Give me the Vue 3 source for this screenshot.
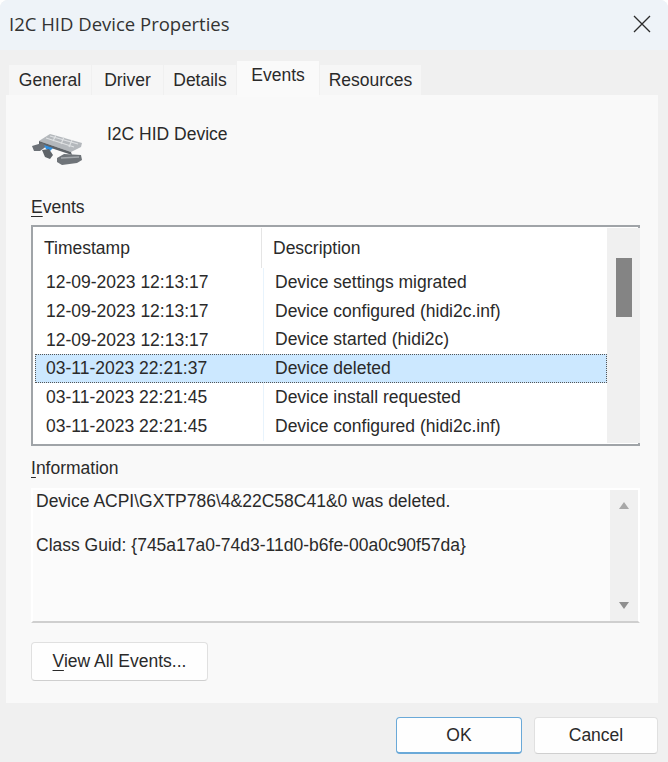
<template>
  <div class="dialog">
    <header class="titlebar">
      <span class="title">I2C HID Device Properties</span>
      <svg class="close" width="20" height="20" viewBox="0 0 20 20">
        <path d="M2 2 L18 18 M18 2 L2 18" stroke="#2b2b2b" stroke-width="1.3" fill="none" />
      </svg>
    </header>

    <nav class="tabs">
      <div
        v-for="tab in tabs"
        :key="tab.name"
        class="tab"
        :class="{ active: tab.name === 'Events' }"
        :style="{ width: tab.width + 'px' }"
      >
        {{ tab.name }}
      </div>
    </nav>

    <main class="panel">
      <div class="device">
        <svg class="device-icon" width="54" height="32" viewBox="0 0 54 32">
          <path d="M11 6 L19 1 L51 10 L50 14 L40 19 L8 8 Z" fill="#b4b8bc" />
          <path d="M8 8 L40 19 L41 22 L8 11 Z" fill="#5e6368" />
          <path d="M19 3 L47 11 M15 5 L43 14 M25 2 L22 8 M33 4 L30 11 M41 7 L38 14" stroke="#dfe1e3" stroke-width="1.2" fill="none" />
          <path d="M1 13 L11 10 L16 13 L9 18 L3 18 Z" fill="#6c7177" />
          <path d="M13 12 L22 15 L19 18 L15 16 Z" fill="#2f8fe0" />
          <path d="M11 17 L18 16 L22 22 L19 26 L14 24 Z" fill="#5f6469" />
          <path d="M26 25 L33 21 L50 22 L51 27 L46 30 L31 32 L26 29 Z" fill="#6f7479" />
          <path d="M30 25 L48 24" stroke="#a5a9ad" stroke-width="1.5" fill="none" />
        </svg>
        <span class="device-name">I2C HID Device</span>
      </div>

      <div class="group-label events-label"><u>E</u>vents</div>
      <div class="listview">
        <div class="list-body">
          <div class="list-head">
            <div class="col-time">Timestamp</div>
            <div class="col-desc">Description</div>
          </div>
          <div
            v-for="(event, i) in events"
            :key="i"
            class="list-row"
            :class="{ selected: i === 3 }"
          >
            <div class="col-time">{{ event.time }}</div>
            <div class="col-desc">{{ event.text }}</div>
          </div>
        </div>
        <div class="list-scroll">
          <div class="thumb"></div>
        </div>
      </div>

      <div class="group-label info-label"><u>I</u>nformation</div>
      <div class="infobox">
        <div class="info-text">
          <p>Device ACPI\GXTP786\4&amp;22C58C41&amp;0 was deleted.</p>
          <p>Class Guid: {745a17a0-74d3-11d0-b6fe-00a0c90f57da}</p>
        </div>
        <div class="info-scroll">
          <span class="arrow up"></span>
          <span class="arrow down"></span>
        </div>
      </div>

      <button class="button view-all"><u>V</u>iew All Events...</button>
    </main>

    <footer class="actions">
      <button class="button ok">OK</button>
      <button class="button cancel">Cancel</button>
    </footer>
  </div>
</template>

<script setup>
const tabs = [
  { name: 'General', width: 82 },
  { name: 'Driver', width: 71 },
  { name: 'Details', width: 72 },
  { name: 'Events', width: 82 },
  { name: 'Resources', width: 101 },
]

const events = [
  { time: '12-09-2023 12:13:17', text: 'Device settings migrated' },
  { time: '12-09-2023 12:13:17', text: 'Device configured (hidi2c.inf)' },
  { time: '12-09-2023 12:13:17', text: 'Device started (hidi2c)' },
  { time: '03-11-2023 22:21:37', text: 'Device deleted' },
  { time: '03-11-2023 22:21:45', text: 'Device install requested' },
  { time: '03-11-2023 22:21:45', text: 'Device configured (hidi2c.inf)' },
]
</script>

<style>
html,
body {
  margin: 0;
  background: #fff;
}
</style>

<style scoped>
.dialog {
  width: 668px;
  height: 762px;
  overflow: hidden;
  background: #f0f0f0;
  border-radius: 8px 8px 0 0;
  font-family: "Liberation Sans", Arial, sans-serif;
  font-size: 17.5px;
  color: #2a2a2a;
  display: flex;
  flex-direction: column;
}

.titlebar {
  height: 50px;
  flex: none;
  background: #eef3f8;
  display: flex;
  align-items: center;
  justify-content: space-between;
  padding: 0 16px 3px 9px;
  box-sizing: border-box;
}

.title {
  font-family: "Open Sans", sans-serif;
  font-size: 18.5px;
  color: #333;
}

.tabs {
  display: flex;
  align-items: flex-end;
  gap: 1px;
  height: 45px;
  flex: none;
  padding-left: 9px;
  box-sizing: border-box;
}

.tab {
  height: 30px;
  box-sizing: border-box;
  background: #f6f6f6;
  display: flex;
  justify-content: center;
  align-items: center;
  padding-top: 1px;
}

.tab.active {
  height: 36px;
  margin-bottom: -2px;
  padding-bottom: 8px;
  background: #fafafa;
  position: relative;
  z-index: 1;
}

.panel {
  margin-left: 6px;
  width: 652px;
  height: 608px;
  flex: none;
  box-sizing: border-box;
  padding: 0 18px 0 25px;
  background: #f9f9f9;
  display: flex;
  flex-direction: column;
  align-items: flex-start;
}

.device {
  height: 82px;
  flex: none;
  display: flex;
  align-items: flex-start;
}

.device-icon {
  margin-top: 38px;
  margin-right: 22px;
}

.device-name {
  margin-top: 29px;
}

.group-label {
  line-height: 20px;
}

.group-label u {
  text-underline-offset: 3px;
}

.events-label {
  margin-top: 20px;
}

.listview {
  margin-top: 8px;
  width: 609px;
  height: 221px;
  box-sizing: border-box;
  border: 2px solid #a0a4a8;
  background: #fff;
  display: flex;
}

.list-body {
  width: 574px;
  flex: none;
  padding-top: 1px;
}

.list-head {
  height: 40px;
  display: flex;
  align-items: center;
}

.list-head .col-time {
  height: 100%;
  display: flex;
  align-items: center;
  border-right: 1px solid #e5e5e5;
}

.list-row {
  height: 28.8px;
  display: flex;
  align-items: center;
  box-sizing: border-box;
  margin-left: 2px;
  width: 572px;
}

.col-time {
  width: 229px;
  flex: none;
  padding-left: 11px;
  box-sizing: border-box;
  border-right: 1px solid #e8f3fc;
  height: 100%;
  line-height: 28.8px;
}

.list-head .col-time {
  width: 229px;
  margin-left: 0;
  padding-left: 11px;
}

.col-desc {
  padding-left: 11px;
}

.list-row.selected {
  background: #cce8ff;
  outline: 1px dotted #555;
  outline-offset: -1px;
}

.list-row.selected .col-time {
  border-right-color: #cce8ff;
}

.list-scroll {
  width: 33px;
  flex: none;
  background: #f0f0f0;
  margin: 1px 0;
  display: flex;
  justify-content: center;
}

.thumb {
  width: 16px;
  height: 59px;
  margin-top: 30px;
  background: #848484;
}

.info-label {
  margin-top: 12px;
}

.infobox {
  margin-top: 10px;
  width: 609px;
  height: 135px;
  box-sizing: border-box;
  background: #fbfbfb;
  border: 2px solid #fff;
  border-bottom-color: #cfcfcf;
  display: flex;
}

.info-text {
  flex: 1;
  padding: 1px 0 0 3px;
}

.info-text p {
  margin: 0 0 23.5px;
  line-height: 20px;
}

.info-scroll {
  width: 28px;
  flex: none;
  background: #f0f0f0;
  display: flex;
  flex-direction: column;
  align-items: center;
  justify-content: space-between;
  padding: 12px 0;
  box-sizing: border-box;
}

.arrow {
  width: 0;
  height: 0;
  border-left: 5px solid transparent;
  border-right: 5px solid transparent;
}

.arrow.up {
  border-bottom: 7px solid #a8a8a8;
}

.arrow.down {
  border-top: 7px solid #8f8f8f;
}

.button {
  font: inherit;
  color: #2a2a2a;
  background: #fefefe;
  border: 1px solid #e0e0e0;
  border-bottom-color: #cfcfcf;
  border-radius: 4px;
  padding: 0;
  box-sizing: border-box;
}

.button u {
  text-underline-offset: 3px;
}

.view-all {
  margin-top: 19px;
  width: 177px;
  height: 39px;
}

.actions {
  flex: 1;
  display: flex;
  justify-content: flex-end;
  gap: 12px;
  padding: 14px 10px 0 0;
}

.ok,
.cancel {
  height: 37px;
}

.ok {
  width: 126px;
  border: 1px solid #6aa9d8;
  border-bottom-width: 2px;
}

.cancel {
  width: 124px;
}
</style>
